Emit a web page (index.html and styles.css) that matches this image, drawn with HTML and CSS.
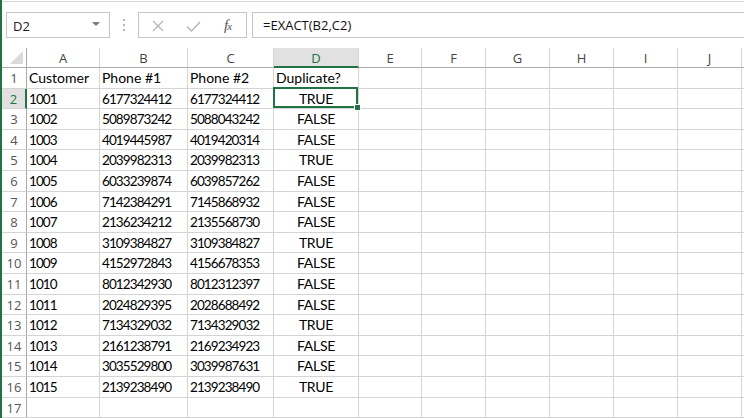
FILE: index.html
```html
<!DOCTYPE html>
<html lang="en">
  <head>
    <meta charset="utf-8">
    <title>Duplicate check</title>
    <link rel="stylesheet" href="styles.css">
  </head>
  <body>
    <div class="app">
        <div class="top-rule"></div>
        <div class="formula-bar">
            <div class="name-box">
                <span>D2</span>
                <span class="arrow"></span>
            </div>
            <div class="grip">
                <svg width="4" height="14" viewBox="0 0 4 14">
                    <circle cx="2" cy="2" r="1.1"/>
                    <circle cx="2" cy="7" r="1.1"/>
                    <circle cx="2" cy="12" r="1.1"/>
                </svg>
            </div>
            <div class="fx-buttons">
                <svg class="btn-cancel" width="12" height="12" viewBox="0 0 12 12">
                    <path d="M1 1 L11 11 M11 1 L1 11"/>
                </svg>
                <svg class="btn-enter" width="15" height="11" viewBox="0 0 15 11">
                    <path d="M1 5.5 L5.5 10 L14 1"/>
                </svg>
                <span class="fx"><i>f</i><i class="fx-x">x</i></span>
            </div>
            <div class="formula">=EXACT(B2,C2)</div>
        </div>
        <div class="sheet" id="sheet"></div>
    </div>
    <script>
        let sheet=document.querySelector("#sheet");
        const cols=["A","B","C","D","E","F","G","H","I","J",""];
        const rows=[
            ["Customer","Phone #1","Phone #2","Duplicate?"],
            ["1001","6177324412","6177324412","TRUE"],
            ["1002","5089873242","5088043242","FALSE"],
            ["1003","4019445987","4019420314","FALSE"],
            ["1004","2039982313","2039982313","TRUE"],
            ["1005","6033239874","6039857262","FALSE"],
            ["1006","7142384291","7145868932","FALSE"],
            ["1007","2136234212","2135568730","FALSE"],
            ["1008","3109384827","3109384827","TRUE"],
            ["1009","4152972843","4156678353","FALSE"],
            ["1010","8012342930","8012312397","FALSE"],
            ["1011","2024829395","2028688492","FALSE"],
            ["1012","7134329032","7134329032","TRUE"],
            ["1013","2161238791","2169234923","FALSE"],
            ["1014","3035529800","3039987631","FALSE"],
            ["1015","2139238490","2139238490","TRUE"],
            []
        ];
        const addCell=(cls,text)=>{
            let div=document.createElement("div");
            div.className=cls;
            div.innerText=text||"";
            sheet.appendChild(div);
            return div;
        }
        addCell("corner");
        cols.forEach((c)=>{
            addCell(c=="D" ? "col-head active" : "col-head",c);
        });
        rows.forEach((row,r)=>{
            addCell(r==1 ? "row-head active" : "row-head",r+1);
            cols.forEach((c,i)=>{
                let cls="cell";
                if(r>0 && i<3) cls+=" num";
                if(i==3 && r>0) cls+=" center";
                if(i==3 && r==1) cls+=" selected";
                let cell=addCell(cls,row[i]);
                if(i==3 && r==1){
                    let handle=document.createElement("span");
                    handle.className="handle";
                    cell.appendChild(handle);
                }
            });
        });
    </script>
  </body>
</html>
```

FILE: styles.css
```css
*{
    margin: 0;
    padding: 0;
    box-sizing: border-box;
}
body{
    background: #fff;
    font-family: "Open Sans", "Noto Sans", sans-serif;
}
.app{
    width: 744px;
    height: 418px;
    overflow: hidden;
    border-left: 2px solid #217346;
}
.top-rule{
    margin-top: 1px;
    border-top: 1px solid #d5d5d5;
}
.formula-bar{
    display: flex;
    height: 26px;
    margin-top: 10px;
}
.name-box{
    width: 104px;
    margin-left: 4px;
    border: 1px solid #c6c6c6;
    display: flex;
    align-items: center;
    justify-content: space-between;
    padding: 1px 9px 0 6px;
    font-size: 13px;
    color: #222;
}
.arrow{
    width: 0;
    height: 0;
    border-left: 4px solid transparent;
    border-right: 4px solid transparent;
    border-top: 4px solid #7a7a7a;
    margin-bottom: 3px;
}
.grip{
    width: 28px;
    display: flex;
    justify-content: center;
    align-items: center;
}
.grip svg{
    fill: #a6a6a6;
}
.fx-buttons{
    width: 109px;
    border: 1px solid #c6c6c6;
    display: flex;
    align-items: center;
    padding-left: 13px;
}
.fx-buttons svg{
    fill: none;
    stroke: #b4b4b4;
    stroke-width: 1.3;
}
.btn-cancel{
    margin-top: 1px;
}
.btn-enter{
    margin-left: 22px;
    margin-top: 2px;
}
.fx{
    margin-left: 23px;
    font-family: "Liberation Serif", serif;
    font-size: 15px;
    color: #555;
    letter-spacing: -1px;
}
.fx-x{
    font-size: 11px;
}
.formula{
    flex: 1;
    margin-left: 5px;
    border: 1px solid #c6c6c6;
    border-right: none;
    padding: 1px 0 0 10px;
    font-size: 13px;
    line-height: 23px;
    color: #111;
}
.sheet{
    margin-top: 10px;
    display: grid;
    grid-template-columns: 25px 73px 88px 86px 85px 63px 64px 64px 64px 64px 64px 64px;
    grid-template-rows: 20px repeat(17, 20.6px);
}
.corner{
    border-right: 1px solid #ababab;
    border-bottom: 1px solid #ababab;
    position: relative;
}
.corner::after{
    content: "";
    position: absolute;
    right: 3px;
    bottom: 3px;
    width: 13px;
    height: 13px;
    background: #dadada;
    clip-path: polygon(100% 0, 100% 100%, 0 100%);
}
.col-head{
    font-size: 13px;
    color: #444;
    text-align: center;
    line-height: 20px;
    border-right: 1px solid #d4d4d4;
    border-bottom: 1px solid #ababab;
}
.row-head{
    font-size: 13px;
    color: #555;
    text-align: center;
    line-height: 20px;
    border-right: 1px solid #ababab;
    border-bottom: 1px solid #d4d4d4;
}
.col-head.active{
    background: #e1e1e1;
    color: #217346;
    border-bottom: 2px solid #217346;
}
.row-head.active{
    background: #e1e1e1;
    color: #217346;
    border-right: 2px solid #217346;
}
.cell{
    font-family: Lato, "Open Sans", sans-serif;
    font-size: 14px;
    line-height: 20px;
    color: #000;
    padding: 0 2px;
    white-space: nowrap;
    overflow: hidden;
    border-right: 1px solid #d4d4d4;
    border-bottom: 1px solid #d4d4d4;
}
.num{
    font-size: 13.5px;
    letter-spacing: -0.9px;
}
.center{
    text-align: center;
    letter-spacing: -0.3px;
}
.selected{
    position: relative;
    overflow: visible;
}
.selected::after{
    content: "";
    position: absolute;
    left: -1px;
    top: -2px;
    right: 0;
    bottom: 0;
    border: 2px solid #217346;
}
.handle{
    position: absolute;
    right: -3px;
    bottom: -3px;
    width: 7px;
    height: 7px;
    background: #217346;
    border: 1px solid #fff;
    z-index: 2;
}
```
